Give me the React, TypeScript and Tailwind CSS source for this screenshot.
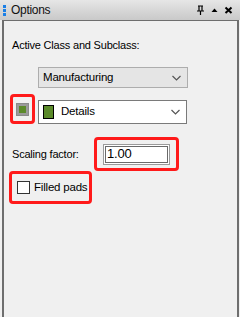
export default function App() {
  return (
    <div className="w-[240px] h-[317px] bg-[#f0f0f0] flex flex-col overflow-hidden text-[11px] tracking-[-0.2px] text-black" style={{ fontFamily: '"Liberation Sans", Arial, sans-serif' }}>
      <div className="h-[20px] flex items-center bg-gradient-to-b from-[#e6e6e6] to-[#c9c9c9] pl-[3px] pr-[7px]">
        <div className="flex flex-col gap-[1px] mr-[5px]">
          <div className="w-[3px] h-[3px] bg-[#1a7fe6]" />
          <div className="w-[3px] h-[3px] bg-[#1a7fe6]" />
          <div className="w-[3px] h-[3px] bg-[#1a7fe6]" />
        </div>
        <span className="text-[12px] tracking-[-0.3px] text-[#111]">Options</span>
        <div className="ml-auto flex items-center gap-[5px]">
          <svg width="9" height="10" viewBox="0 0 9 10">
            <path d="M2 1h5M3 1v5M6 1v5M1 6h7M4.5 6v4" stroke="#000" strokeWidth="1.2" fill="none" />
          </svg>
          <svg width="9" height="10" viewBox="0 0 9 10">
            <path d="M1.5 7L4.5 3.5L7.5 7Z" fill="#000" />
          </svg>
          <svg width="9" height="10" viewBox="0 0 9 10">
            <path d="M1.5 2.5L7.5 8M7.5 2.5L1.5 8" stroke="#000" strokeWidth="2" />
          </svg>
        </div>
      </div>
      <div className="flex-1 ml-[2px] mr-[1px] border-l-2 border-r-2 border-t border-[#6e6e6e] flex flex-col pl-[6px]">
        <div className="mt-[17px] ml-[2px] leading-[14px]">Active Class and Subclass:</div>
        <div className="mt-[15px] ml-[28px] w-[150px] h-[21px] bg-[#e5e5e5] border border-[#adadad] flex items-center pl-[4px] pr-[6px] text-[11.5px]">
          <span>Manufacturing</span>
          <svg className="ml-auto" width="9" height="6" viewBox="0 0 9 6">
            <path d="M0.5 1L4.5 5L8.5 1" stroke="#555" strokeWidth="1.2" fill="none" />
          </svg>
        </div>
        <div className="mt-[6px] flex items-end">
          <div className="w-[25px] h-[30px] border-[3px] border-[#ff1a1a] rounded-[4px] flex items-center justify-center">
            <div className="w-[13px] h-[13px] border border-[#8a8a8a] bg-[#9a9a9a] p-[2px]">
              <div className="w-full h-full bg-[#5b8a2a]" />
            </div>
          </div>
          <div className="ml-[3px] w-[149px] h-[24px] bg-white border border-[#7a7a7a] flex items-center pl-[4px] pr-[6px] text-[11.5px]">
            <div className="w-[11px] h-[14px] bg-[#5b8a2a] border border-black" />
            <span className="ml-[7px]">Details</span>
            <svg className="ml-auto" width="9" height="6" viewBox="0 0 9 6">
              <path d="M0.5 1L4.5 5L8.5 1" stroke="#555" strokeWidth="1.2" fill="none" />
            </svg>
          </div>
        </div>
        <div className="mt-[13px] flex items-center">
          <span className="ml-[2px] w-[82px] whitespace-nowrap">Scaling factor:</span>
          <div className="w-[85px] h-[34px] border-[3px] border-[#ff1a1a] rounded-[4px] flex items-center justify-center">
            <div className="w-[67px] h-[21px] border border-[#9a9a9a] bg-white p-[1px]">
              <div className="w-full h-full border border-[#6a6a6a] flex items-center pl-[1px] text-[13px]">1.00</div>
            </div>
          </div>
        </div>
        <div className="-ml-[1px] w-[83px] h-[33px] border-[3px] border-[#ff1a1a] rounded-[4px] flex items-center pl-[5px]">
          <div className="w-[13px] h-[13px] border border-[#333] bg-white shrink-0" />
          <span className="ml-[4px] text-[11.5px] whitespace-nowrap">Filled pads</span>
        </div>
      </div>
    </div>
  )
}
